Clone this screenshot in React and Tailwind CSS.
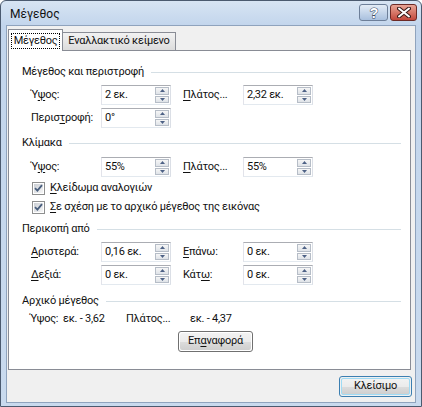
import React from 'react';

// Spin box: white field with the two small arrow buttons on its right edge
const SpinBox = ({ value }) => (
  <div className="w-[70px] h-[20px] flex bg-white border border-[#abadb3] border-b-[#e3e9ef] border-r-[#dbdfe6] border-l-[#e2e3ea]">
    <span className="flex-1 pl-[3px] leading-[18px] whitespace-nowrap overflow-hidden">{value}</span>
    <div className="w-[15px] flex flex-col gap-px py-px pr-px">
      <div className="flex-1 flex items-center justify-center border border-[#b6bdc7] bg-gradient-to-b from-[#f6f6f6] to-[#dfe3e8]">
        <svg width="5" height="3" viewBox="0 0 5 3"><path d="M2.5 0L5 3H0z" fill="#4d6185" /></svg>
      </div>
      <div className="flex-1 flex items-center justify-center border border-[#b6bdc7] bg-gradient-to-b from-[#f6f6f6] to-[#dfe3e8]">
        <svg width="5" height="3" viewBox="0 0 5 3"><path d="M0 0H5L2.5 3z" fill="#4d6185" /></svg>
      </div>
    </div>
  </div>
);

const GroupHeader = ({ children, className = '' }) => (
  <div className={`flex items-center pl-[13px] pr-[9px] h-[16px] ${className}`}>
    <span className="whitespace-nowrap">{children}</span>
    <div className="flex-1 h-px bg-[#d5dfe5] ml-[7px]"></div>
  </div>
);

const FieldRow = ({ label1, value1, label2, value2, className = '' }) => (
  <div className={`flex items-center pl-[22px] h-[20px] ${className}`}>
    <span className="w-[70px] whitespace-nowrap">{label1}</span>
    <SpinBox value={value1} />
    {label2 && <span className="w-[72px] pl-[12px] whitespace-nowrap">{label2}</span>}
    {label2 && <SpinBox value={value2} />}
  </div>
);

const CheckBox = ({ children, className = '' }) => (
  <div className={`flex items-center pl-[23px] h-[16px] ${className}`}>
    <div className="w-[13px] h-[13px] border border-[#8e8f8f] bg-white p-px">
      <div className="w-full h-full bg-gradient-to-br from-[#cbcfd5] to-[#f6f6f6] flex items-center justify-center">
        <svg width="9" height="8" viewBox="0 0 9 8">
          <path d="M1 4.2L3.4 6.6L8 1.2" stroke="#4a5f7e" strokeWidth="1.8" fill="none" />
        </svg>
      </div>
    </div>
    <span className="ml-[5px] whitespace-nowrap">{children}</span>
  </div>
);

const WinButton = ({ children, isDefault, className = '' }) => (
  <div className={`h-[21px] rounded-[3px] border ${isDefault ? 'border-[#3c7fb1]' : 'border-[#707070]'} p-px ${className}`}>
    <div className={`h-full rounded-[2px] ${isDefault ? 'border border-[#9fdbf4]' : ''} bg-[linear-gradient(#f2f2f2_0%,#ebebeb_50%,#dddddd_50%,#cfcfcf_100%)] flex items-center justify-center whitespace-nowrap`}>
      {children}
    </div>
  </div>
);

const U = ({ children }) => <span className="underline underline-offset-2">{children}</span>;

export default function App() {
  return (
    <div className="w-[422px] h-[407px] flex flex-col border border-[#4b5a6f] rounded-t-[6px] bg-[linear-gradient(#d7e4f3,#c2d5ec_25px,#c9daee)] font-['Roboto',sans-serif] text-[11px] tracking-[-0.25px] text-[#111] overflow-hidden">
      {/* Title bar */}
      <div className="h-[24px] flex items-center pl-[9px] pr-[4px]">
        <span className="text-[12px] mt-[2px] tracking-normal">Μέγεθος</span>
        <div className="ml-auto flex gap-[2px] self-start mt-[3px]">
          <div className="w-[29px] h-[17px] rounded-[3px] border border-[#6d7f99] bg-gradient-to-b from-[#e3ecf6] to-[#a9c0de] flex items-center justify-center">
            <svg width="14" height="14" viewBox="0 0 14 14">
              <text x="7" y="12" textAnchor="middle" fontSize="14" fontWeight="bold" fontFamily="Liberation Sans, sans-serif" fill="#fff" stroke="#3b4d66" strokeWidth="1" paintOrder="stroke">?</text>
            </svg>
          </div>
          <div className="w-[27px] h-[17px] rounded-[3px] border border-[#6c2a26] bg-gradient-to-b from-[#e8a496] to-[#c2463b] flex items-center justify-center">
            <svg width="14" height="11" viewBox="0 0 14 11">
              <path d="M2 1.5L12 9.5M12 1.5L2 9.5" stroke="#3a1a18" strokeWidth="4" strokeLinecap="round" />
              <path d="M2 1.5L12 9.5M12 1.5L2 9.5" stroke="#fff" strokeWidth="2" strokeLinecap="round" />
            </svg>
          </div>
        </div>
      </div>

      {/* Client area */}
      <div className="flex-1 mx-[5px] mb-[3px] border border-[#8fa3bd] bg-[#f0f0f0] flex flex-col">
        {/* Tabs */}
        <div className="flex items-end h-[21px] mt-[3px] ml-px">
          <div className="relative z-10 h-[22px] -mb-px w-[55px] bg-white border border-b-0 border-[#898c95] flex items-center justify-center">
            <span className="border border-dotted border-black px-[2px] leading-[14px] whitespace-nowrap">Μέγεθος</span>
          </div>
          <div className="h-[18px] -ml-px w-[114px] border border-b-0 border-[#898c95] bg-gradient-to-b from-[#f2f2f2] to-[#dcdcdc] flex items-center justify-center whitespace-nowrap">
            Εναλλακτικό κείμενο
          </div>
        </div>

        {/* Tab page */}
        <div className="h-[320px] ml-px mr-[4px] bg-white border border-[#898c95] flex flex-col">
          <GroupHeader className="mt-[13px]">Μέγεθος και περιστροφή</GroupHeader>
          <FieldRow className="mt-[5px]" label1={<>Ύ<U>ψ</U>ος:</>} value1="2 εκ." label2={<><U>Π</U>λάτος...</>} value2="2,32 εκ." />
          <FieldRow className="mt-[3px]" label1={<>Περισ<U>τ</U>ροφή:</>} value1="0°" />

          <GroupHeader className="mt-[7px]">Κλίμακα</GroupHeader>
          <FieldRow className="mt-[6px]" label1={<>Ύ<U>ψ</U>ος:</>} value1="55%" label2={<><U>Π</U>λάτος...</>} value2="55%" />
          <CheckBox className="mt-[3px]"><U>Κ</U>λείδωμα αναλογιών</CheckBox>
          <CheckBox className="mt-[3px]"><U>Σ</U>ε σχέση με το αρχικό μέγεθος της εικόνας</CheckBox>

          <GroupHeader className="mt-[6px]">Περικοπή από</GroupHeader>
          <FieldRow className="mt-[5px]" label1={<><U>Α</U>ριστερά:</>} value1="0,16 εκ." label2={<><U>Ε</U>πάνω:</>} value2="0 εκ." />
          <FieldRow className="mt-[3px]" label1={<><U>Δ</U>εξιά:</>} value1="0 εκ." label2={<>Κάτ<U>ω</U>:</>} value2="0 εκ." />

          <GroupHeader className="mt-[8px]">Αρχικό μέγεθος</GroupHeader>
          <div className="flex items-center h-[16px] mt-[2px] pl-[21px] whitespace-nowrap">
            <span className="w-[33px]">Ύψος:</span>
            <span className="w-[63px]">εκ. - 3,62</span>
            <span className="w-[64px]">Πλάτος...</span>
            <span>εκ. - 4,37</span>
          </div>
          <div className="flex mt-[4px] pl-[169px]">
            <WinButton className="w-[75px] h-[20px]">Επ<U>α</U>ναφορά</WinButton>
          </div>
        </div>

        {/* Bottom buttons */}
        <div className="flex justify-end mt-[6px] mr-[3px]">
          <WinButton isDefault className="w-[73px]">Κλείσιμο</WinButton>
        </div>
      </div>
    </div>
  );
}
